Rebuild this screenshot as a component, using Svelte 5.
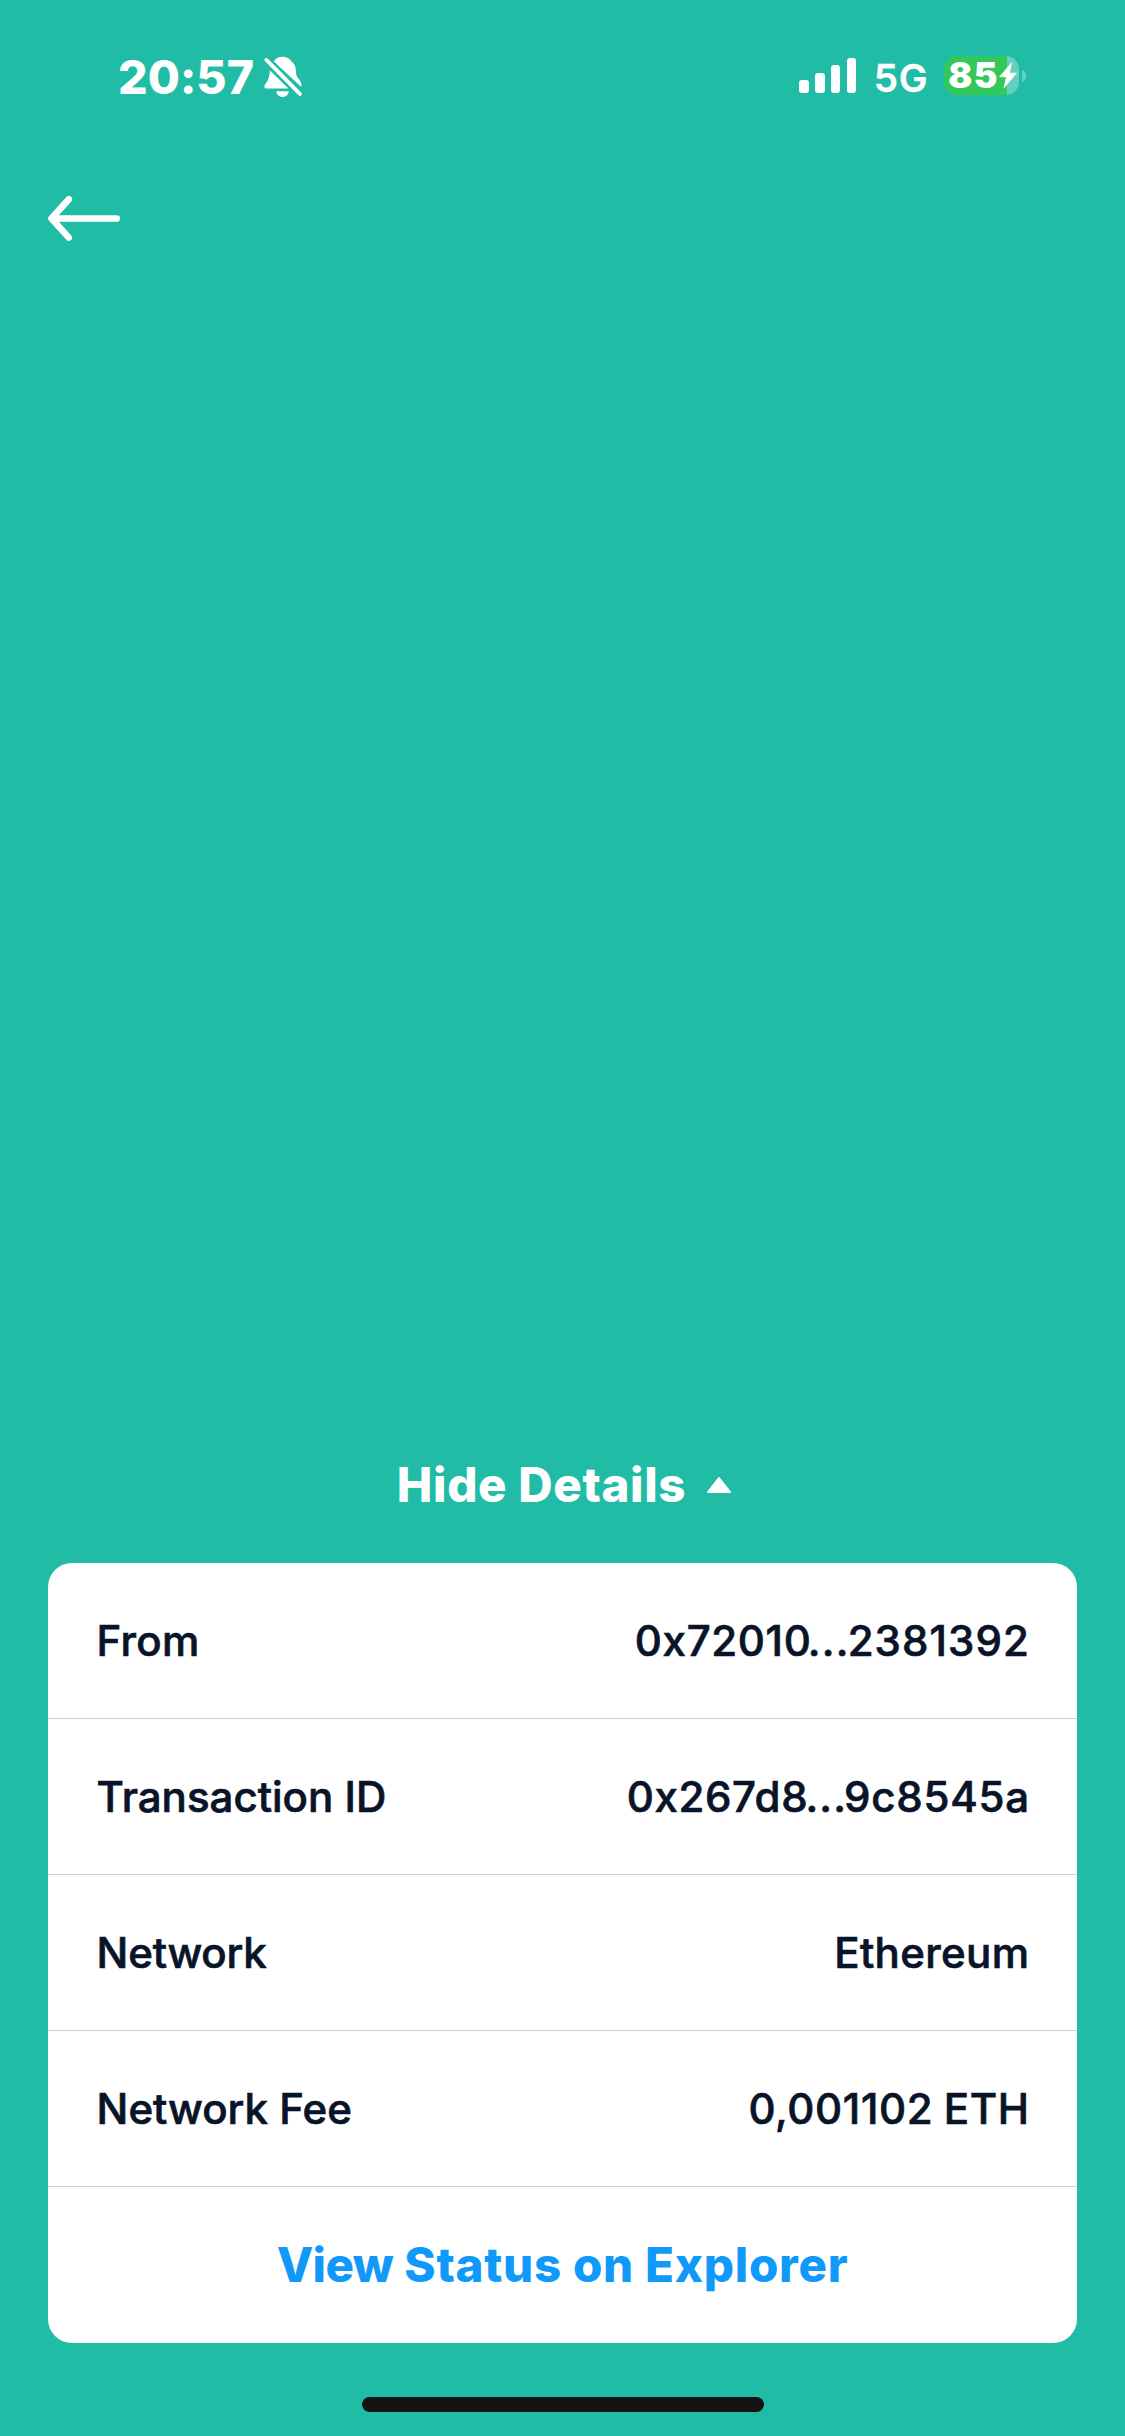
<script>
  const rows = [
    { label: 'From', parts: ['0x72010', '...', '2381392'], kind: 'address' },
    { label: 'Transaction ID', parts: ['0x267d8', '...', '9c8545a'], kind: 'hash' },
    { label: 'Network', parts: ['Ethereum'], kind: 'name' },
    { label: 'Network Fee', parts: ['0,001102 ETH'], kind: 'amount' }
  ];
  const bars = [13.5, 20, 28, 35];
</script>

<main>
  <header class="status">
    <div class="clock">
      <span class="time">20:57</span>
      <svg class="bell" width="38" height="42" viewBox="0 0 38 42">
        <path d="M9.5 5.2C11.6 4.2 12.3 0.8 18.3 0.8C25 0.8 26.3 4.6 28.7 6.6C32 9.5 31.8 14 32.2 18C32.7 22.6 37.4 24 37.4 29V31Z" fill="#fff" />
        <path d="M5.8 14.3L24.6 32.6H2.6C0.2 32.6-0.2 30 1.2 28.3C3.8 25.1 5.4 21.8 5.8 14.3Z" fill="#fff" />
        <path d="M12.3 35.2H24.8C24.4 38.6 22 41 18.5 41S12.7 38.6 12.3 35.2Z" fill="#fff" />
        <path d="M2.4 3.9L35.9 37.9" stroke="#21bca5" stroke-width="8" />
        <path d="M2.4 3.9L35.9 37.9" stroke="#fff" stroke-width="3.8" stroke-linecap="round" />
      </svg>
    </div>
    <div class="radio">
      <div class="signal">
        {#each bars as h}<i style:height="{h}px"></i>{/each}
      </div>
      <span class="network">5G</span>
      <div class="battery">
        <div class="cell">
          <span class="level">85</span>
          <svg class="bolt" width="18" height="27" viewBox="0 0 18 27">
            <path d="M12.7 0.8L0.6 14.8H7.5L5.1 25.8L17.4 11.2H10.3Z" fill="#fff" stroke="#fff" stroke-width="0.8" stroke-linejoin="round" />
          </svg>
        </div>
        <svg class="nub" width="5" height="12" viewBox="0 0 5 12"><path d="M0 0C5.8 2 5.8 10 0 12Z" fill="#fff" opacity=".3" /></svg>
      </div>
    </div>
  </header>

  <nav>
    <svg width="76" height="48" viewBox="0 0 76 48" fill="none" stroke="#fff" stroke-width="6.6" stroke-linecap="round" stroke-linejoin="round">
      <path d="M70.7 23.5H6M22.8 4.3L5.5 23.5L22.8 42.6" />
    </svg>
  </nav>

  <section>
    <button class="toggle">
      <span>Hide Details</span>
      <svg width="26" height="18" viewBox="0 0 26 18"><path d="M13 2L24 16H2Z" fill="#fff" stroke="#fff" stroke-width="2" stroke-linejoin="round" /></svg>
    </button>
    <div class="card">
      {#each rows as r}
        <div class="row {r.kind}">
          <span class="label">{r.label}</span>
          <span class="value">{#each r.parts as part}<span>{part}</span>{/each}</span>
        </div>
      {/each}
      <button class="explorer"><span><span class="tight">View</span> Status on Explorer</span></button>
    </div>
  </section>
  <div class="home"></div>
</main>

<style>
  :global(body) { background: #21bca5; }
  main {
    box-sizing: border-box;
    width: 1125px;
    height: 2436px;
    display: flex;
    flex-direction: column;
    background: #21bca5;
    color: #fff;
    font-family: Inter, 'Liberation Sans', sans-serif;
    overflow: hidden;
  }
  button { all: unset; box-sizing: border-box; }

  .status {
    box-sizing: border-box;
    height: 152px;
    padding: 48px 98px 0 118px;
    display: flex;
    justify-content: space-between;
    align-items: flex-start;
  }
  .clock, .radio, .battery, .signal { display: flex; }
  .clock { height: 57px; align-items: center; gap: 10px; }
  .time { font-size: 46.5px; font-weight: 800; line-height: 56px; letter-spacing: 0.05px; }
  .radio { height: 55px; align-items: center; }
  .signal { align-items: flex-end; gap: 6.2px; height: 35px; }
  .signal i { width: 9.6px; border-radius: 3px; background: #fff; }
  .network { font-size: 38.5px; font-weight: 600; letter-spacing: 0.7px; line-height: 46px; padding-top: 4px; margin-left: 17.5px; -webkit-text-stroke: 0.3px #fff; }
  .battery { align-items: center; gap: 3.3px; margin-left: 16px; }
  .cell {
    box-sizing: border-box;
    width: 74.5px;
    height: 39px;
    padding-left: 4px;
    border-radius: 13px;
    display: flex;
    align-items: center;
    background: linear-gradient(90deg, #34c759 62.7px, #64d0c0 62.7px);
  }
  .level { font-size: 35.5px; font-weight: 900; line-height: 39px; letter-spacing: 1.4px; }
  .bolt { flex: none; }

  nav { box-sizing: border-box; height: 100px; padding: 43px 46px 0; }

  section { margin: auto 48px 0; }
  .toggle {
    display: flex;
    width: 100%;
    height: 156px;
    padding-left: 4px;
    align-items: center;
    justify-content: center;
    gap: 20px;
    font-size: 47.5px;
    font-weight: 800;
    letter-spacing: 0.65px;
  }
  .toggle span, .explorer > span { padding-bottom: 2px; }
  .card { height: 780px; border-radius: 24px; background: #fff; color: #0a1428; overflow: hidden; }
  .row {
    box-sizing: border-box;
    height: 156px;
    padding: 0 48px;
    display: flex;
    align-items: center;
    justify-content: space-between;
    border-bottom: 1px solid #c8d1d8;
    font-size: 42px;
    font-weight: 500;
    -webkit-text-stroke: 0.7px #0a1428;
  }
  .value { display: flex; white-space: pre; }
  .label { letter-spacing: 0.02px; padding-left: 0.6px; }
  .address .label { letter-spacing: 0.3px; }
  .name .label { letter-spacing: -0.2px; }
  .name .value { letter-spacing: 0.35px; margin-right: -0.35px; }
  .amount .value { letter-spacing: 0.65px; word-spacing: -1.5px; margin-right: -0.65px; }

  .address .value, .hash .value { letter-spacing: 0.65px; }
  .value span:nth-child(2) { letter-spacing: 1.2px; }
  .address .value span:nth-child(1) { margin-right: -3.6px; }
  .address .value span:nth-child(2) { margin-right: -2px; }
  .address .value span:nth-child(3) { letter-spacing: 1.1px; margin-right: -1.1px; }
  .hash .value span:nth-child(1) { margin-right: -2.9px; }
  .hash .value span:nth-child(2) { margin-right: -3.3px; }
  .hash .value span:nth-child(3) { letter-spacing: 0.8px; margin-right: -1px; }

  .explorer {
    display: flex;
    width: 100%;
    height: 156px;
    align-items: center;
    justify-content: center;
    color: #1199fa;
    font-size: 47.5px;
    font-weight: 800;
    letter-spacing: 0.72px;
  }
  .tight { letter-spacing: -0.6px; }

  .home { flex: none; width: 402px; height: 15px; border-radius: 8px; background: #141414; margin: 54px auto 24px; }
</style>
